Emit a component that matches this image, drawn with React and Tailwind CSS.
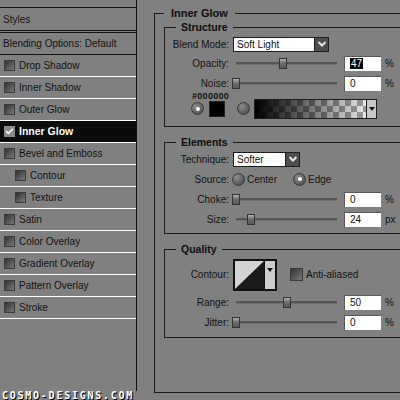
import React from 'react'
import { Check } from 'lucide-react'

const STYLES = [
  { label: 'Drop Shadow' },
  { label: 'Inner Shadow' },
  { label: 'Outer Glow' },
  { label: 'Inner Glow', active: true },
  { label: 'Bevel and Emboss' },
  { label: 'Contour', sub: true },
  { label: 'Texture', sub: true },
  { label: 'Satin' },
  { label: 'Color Overlay' },
  { label: 'Gradient Overlay' },
  { label: 'Pattern Overlay' },
  { label: 'Stroke' },
]

function Box({ size = 'w-[11px] h-[11px]' }) {
  return (
    <span className={`block ${size} shrink-0 border border-[#3a3a3a] bg-linear-to-br from-[#333] to-[#7a7a7a]`} />
  )
}

function Radio({ on }) {
  return (
    <span className="w-[13px] h-[13px] shrink-0 rounded-full border border-[#3a3a3a] bg-[radial-gradient(circle_at_35%_30%,#8c8c8c,#424242)] flex items-center justify-center">
      {on && <span className="w-[4px] h-[4px] rounded-full bg-white" />}
    </span>
  )
}

function Chevron() {
  return (
    <svg width="10" height="8" viewBox="0 0 10 8">
      <polyline points="1.5,2 5,5.5 8.5,2" fill="none" stroke="#e6e6e6" strokeWidth="2" />
    </svg>
  )
}

function Select({ value, width }) {
  return (
    <div className="flex h-[15px] border border-[#1e1e1e] ml-[4px]">
      <div className={`${width} bg-white pl-[3px] leading-[13px]`}>{value}</div>
      <div className="w-[14px] bg-[#4e4e4e] border-l border-[#1e1e1e] flex items-center justify-center">
        <Chevron />
      </div>
    </div>
  )
}

function Slider({ pct }) {
  return (
    <div className="relative ml-[7px] w-[101px] h-[3px] bg-[#555] border-b border-[#6e6e6e]">
      <span
        className="absolute top-[-4px] w-[8px] h-[11px] border border-[#333] bg-linear-to-b from-[#b0b0b0] via-[#6a6a6a] to-[#5a5a5a]"
        style={{ left: `calc(${pct}% - 4px)` }}
      />
    </div>
  )
}

function Field({ value, selected }) {
  return (
    <div className="ml-[7px] w-[37px] h-[15px] bg-white border-t border-l border-[#5a5a5a] pl-[5px] leading-[13px]">
      {selected ? <span className="bg-black text-white px-[1px]">{value}</span> : value}
    </div>
  )
}

function SliderRow({ label, pct, value, unit, h, selected }) {
  return (
    <div className={`flex items-center ${h}`}>
      <span className="w-[64px] text-right">{label}</span>
      <Slider pct={pct} />
      <Field value={value} selected={selected} />
      <span className="ml-[4px]">{unit}</span>
    </div>
  )
}

export default function App() {
  return (
    <div className="w-[400px] h-[400px] overflow-hidden bg-[#808080] flex text-[10px] text-[#121212] font-['Liberation_Sans',Arial,sans-serif]">
      {/* Styles list */}
      <div className="flex flex-col w-[137px] shrink-0">
        <div className="h-[391px] border-r border-[#111] pt-[7px]">
          <div className="h-[24px] border-y border-[#141414] flex items-center pl-[3px]">Styles</div>
          <div className="h-[23px] mt-[1px] border-y border-[#141414] flex items-center pl-[3px]">
            Blending Options: Default
          </div>
          {STYLES.map(({ label, active, sub }) => (
            <div
              key={label}
              className={`h-[22px] border-b border-white flex items-center gap-[4px] ${sub ? 'pl-[15px]' : 'pl-[4px]'} ${
                active ? 'bg-[#0b0b0b] text-white font-bold text-[10.5px]' : ''
              }`}
            >
              {active ? (
                <span className="w-[11px] h-[11px] shrink-0 bg-[#8a8a8a] flex items-center justify-center">
                  <Check size={9} strokeWidth={4} color="#fff" />
                </span>
              ) : (
                <Box />
              )}
              {label}
            </div>
          ))}
        </div>
        <div className="h-[9px] leading-[9px] pl-[2px] text-white font-bold text-[10px] tracking-[1.75px] font-['DejaVu_Sans_Mono',monospace] [text-shadow:1px_1px_0_#000]">
          COSMO-DESIGNS.COM
        </div>
      </div>

      {/* Inner Glow panel */}
      <fieldset className="ml-[17px] mt-[6px] h-[387px] w-[300px] shrink-0 border border-[#1c1c1c] pl-[9px]">
        <legend className="px-[7px] leading-[14px] text-[11px] font-bold text-[#0e0e0e]">Inner Glow</legend>

        <fieldset className="w-[300px] border border-[#1c1c1c] pb-[8px]">
          <legend className="ml-[11px] px-[5px] leading-[14px] text-[10.5px] font-bold text-[#0e0e0e]">Structure</legend>
          <div className="flex items-center h-[20px]">
            <span className="w-[64px] text-right">Blend Mode:</span>
            <Select value="Soft Light" width="w-[80px]" />
          </div>
          <SliderRow label="Opacity:" pct={47} value="47" unit="%" h="h-[19px]" selected />
          <SliderRow label="Noise:" pct={0} value="0" unit="%" h="h-[21px]" />
          <div className="h-[5px] leading-[5px] pl-[27px] text-[9px] font-bold tracking-[0.3px] text-[#111]">#000000</div>
          <div className="flex items-center h-[19px] pl-[26px]">
            <Radio on />
            <span className="ml-[5px] w-[16px] h-[16px] bg-black border border-[#222]" />
            <span className="ml-[12px]">
              <Radio />
            </span>
            <div className="ml-[4px] flex h-[20px] border border-[#1e1e1e]">
              <div className="w-[111px] bg-[repeating-conic-gradient(#9a9a9a_0_25%,#e8e8e8_0_50%)] bg-[length:12px_12px]">
                <div className="w-full h-full bg-linear-to-r from-black to-transparent" />
              </div>
              <div className="w-[10px] bg-[#c8c8c8] border-l border-[#1e1e1e] flex items-center justify-center">
                <svg width="6" height="4" viewBox="0 0 6 4">
                  <polygon points="0,0 6,0 3,4" fill="#111" />
                </svg>
              </div>
            </div>
          </div>
        </fieldset>

        <fieldset className="mt-[8px] w-[300px] border border-[#1c1c1c] pb-[4px]">
          <legend className="ml-[11px] px-[5px] leading-[14px] text-[10.5px] font-bold text-[#0e0e0e]">Elements</legend>
          <div className="flex items-center h-[20px]">
            <span className="w-[64px] text-right">Technique:</span>
            <Select value="Softer" width="w-[51px]" />
          </div>
          <div className="flex items-center h-[20px]">
            <span className="w-[64px] text-right">Source:</span>
            <span className="ml-[3px]">
              <Radio />
            </span>
            <span className="ml-[2px] w-[46px]">Center</span>
            <Radio on />
            <span className="ml-[2px]">Edge</span>
          </div>
          <SliderRow label="Choke:" pct={0} value="0" unit="%" h="h-[20px]" />
          <SliderRow label="Size:" pct={15} value="24" unit="px" h="h-[20px]" />
        </fieldset>

        <fieldset className="mt-[8px] w-[300px] border border-[#1c1c1c] pb-[4px]">
          <legend className="ml-[11px] px-[5px] leading-[14px] text-[10.5px] font-bold text-[#0e0e0e]">Quality</legend>
          <div className="flex items-center h-[37px]">
            <span className="w-[64px] text-right">Contour:</span>
            <div className="ml-[4px] flex h-[32px] border-2 border-[#111]">
              <div className="w-[29px] bg-[#d2d2d2]">
                <svg width="29" height="28" viewBox="0 0 29 28" className="block">
                  <polygon points="0,28 29,0 29,28" fill="#1a1a1a" />
                </svg>
              </div>
              <div className="w-[11px] bg-[#cdcdcd] border-l border-[#111] flex justify-center pt-[7px]">
                <svg width="6" height="4" viewBox="0 0 6 4">
                  <polygon points="0,0 6,0 3,4" fill="#111" />
                </svg>
              </div>
            </div>
            <span className="ml-[13px]">
              <Box size="w-[13px] h-[13px]" />
            </span>
            <span className="ml-[3px]">Anti-aliased</span>
          </div>
          <SliderRow label="Range:" pct={50} value="50" unit="%" h="h-[19px]" />
          <SliderRow label="Jitter:" pct={0} value="0" unit="%" h="h-[21px]" />
        </fieldset>
      </fieldset>
    </div>
  )
}
